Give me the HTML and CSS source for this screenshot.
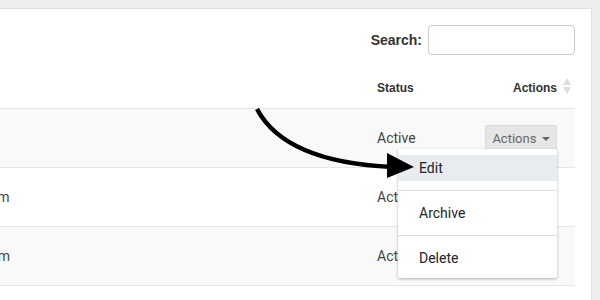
FILE: index.html
```html
<!DOCTYPE html>
<html lang="en">
<head>
    <meta charset="UTF-8">
    <meta name="viewport" content="width=device-width, initial-scale=1.0">
    <title>Users</title>
    <link rel="stylesheet" href="styles.css">
</head>
<body>

<div class="card">
    <div class="search-bar">
        <label for="search">Search:</label>
        <input type="text" id="search">
    </div>

    <table class="users">
        <colgroup>
            <col class="col-email">
            <col class="col-status">
            <col class="col-actions">
        </colgroup>
        <thead>
        <tr>
            <th>Email</th>
            <th>Status</th>
            <th class="th-actions">Actions <span class="sort"></span></th>
        </tr>
        </thead>
        <tbody>
        <tr>
            <td>amy.l@mail.io</td>
            <td>Active</td>
            <td class="td-actions">
                <div class="dropdown">
                    <button class="btn-actions">Actions <span class="caret"></span></button>
                    <ul class="dropdown-menu">
                        <li class="active">Edit</li>
                        <li class="divider"></li>
                        <li>Archive</li>
                        <li class="divider"></li>
                        <li>Delete</li>
                    </ul>
                </div>
            </td>
        </tr>
        <tr>
            <td>jonathan.r@example.com</td>
            <td>Active</td>
            <td class="td-actions"></td>
        </tr>
        <tr>
            <td>michelle.k@example.com</td>
            <td>Active</td>
            <td class="td-actions"></td>
        </tr>
        </tbody>
    </table>
</div>

<svg class="pointer" width="600" height="300" viewBox="0 0 600 300">
    <path d="M257 109 Q285 162 392 167" fill="none" stroke="#000" stroke-width="4.5"/>
    <polygon points="387,153 414,167 387,178" fill="#000"/>
</svg>

</body>
</html>
```

FILE: styles.css
```css
body {
    font-family: Roboto, "Liberation Sans", Arial, sans-serif;
    margin: 0;
    padding: 8px 8px 0 0;
    background-color: #edeef0;
    color: #444;
    position: relative;
    overflow: hidden;
    height: 292px;
}

.card {
    background-color: #fff;
    border: 1px solid #e0e0e0;
    border-left: none;
    margin-left: -178px;
    padding: 16px 16px 0 16px;
    height: 400px;
}

.search-bar {
    display: flex;
    justify-content: flex-end;
    align-items: center;
    gap: 6px;
    margin-bottom: 13px;
}

.search-bar label {
    font-family: "Liberation Sans", Arial, sans-serif;
    font-weight: bold;
    font-size: 14px;
    color: #333;
}

.search-bar input {
    width: 147px;
    height: 30px;
    box-sizing: border-box;
    border: 1px solid #ccc;
    border-radius: 4px;
    padding: 4px 8px;
}

.users {
    width: 100%;
    border-collapse: collapse;
    table-layout: fixed;
    font-size: 14px;
}

.col-email {
    width: auto;
}

.col-status {
    width: 100px;
}

.col-actions {
    width: 110px;
}

.users th {
    font-family: "Liberation Sans", Arial, sans-serif;
    font-size: 12px;
    font-weight: bold;
    color: #333;
    text-align: left;
    line-height: 20px;
    padding: 10px 12px;
    border-bottom: 1px solid #e6e6e6;
}

.users th.th-actions {
    text-align: right;
    padding-right: 18px;
    position: relative;
}

.sort {
    position: absolute;
    right: 4px;
    top: 10px;
    width: 8px;
    height: 18px;
}

.sort::before,
.sort::after {
    content: "";
    position: absolute;
    left: 0;
    border-left: 4px solid transparent;
    border-right: 4px solid transparent;
}

.sort::before {
    top: 0;
    border-bottom: 7px solid #ddd;
}

.sort::after {
    top: 9px;
    border-top: 7px solid #ddd;
}

.users td {
    height: 58px;
    padding: 0 12px;
    line-height: 20px;
    border-bottom: 1px solid #e6e6e6;
    white-space: nowrap;
}

.users tbody tr:nth-child(odd) {
    background-color: #f9f9f9;
}

.users td.td-actions {
    text-align: right;
    padding-right: 18px;
}

.dropdown {
    position: relative;
    display: inline-block;
}

.btn-actions {
    font-family: Roboto, Arial, sans-serif;
    font-size: 13px;
    color: #666;
    background-color: #e6e6e6;
    border: 1px solid #dcdcdc;
    border-radius: 2px;
    width: 72px;
    height: 27px;
    padding: 0;
    vertical-align: middle;
}

.caret {
    display: inline-block;
    width: 0;
    height: 0;
    margin-left: 2px;
    vertical-align: middle;
    border-left: 4px solid transparent;
    border-right: 4px solid transparent;
    border-top: 4px solid #666;
}

.dropdown-menu {
    position: absolute;
    right: 0;
    top: 24px;
    width: 159px;
    margin: 0;
    padding: 6px 0 7px 0;
    list-style: none;
    background-color: #fff;
    text-align: left;
    box-shadow: 0 1px 3px rgba(0, 0, 0, 0.3);
    border-radius: 2px;
    z-index: 2;
}

.dropdown-menu li {
    font-size: 14px;
    color: #212529;
    line-height: 20px;
    padding: 3px 21px;
}

.dropdown-menu li.active {
    background-color: #e9ecef;
}

.dropdown-menu li.divider {
    height: 1px;
    padding: 0;
    margin: 9px 0;
    background-color: #dedede;
}

.pointer {
    position: absolute;
    top: 0;
    left: 0;
    pointer-events: none;
    z-index: 5;
}
```
